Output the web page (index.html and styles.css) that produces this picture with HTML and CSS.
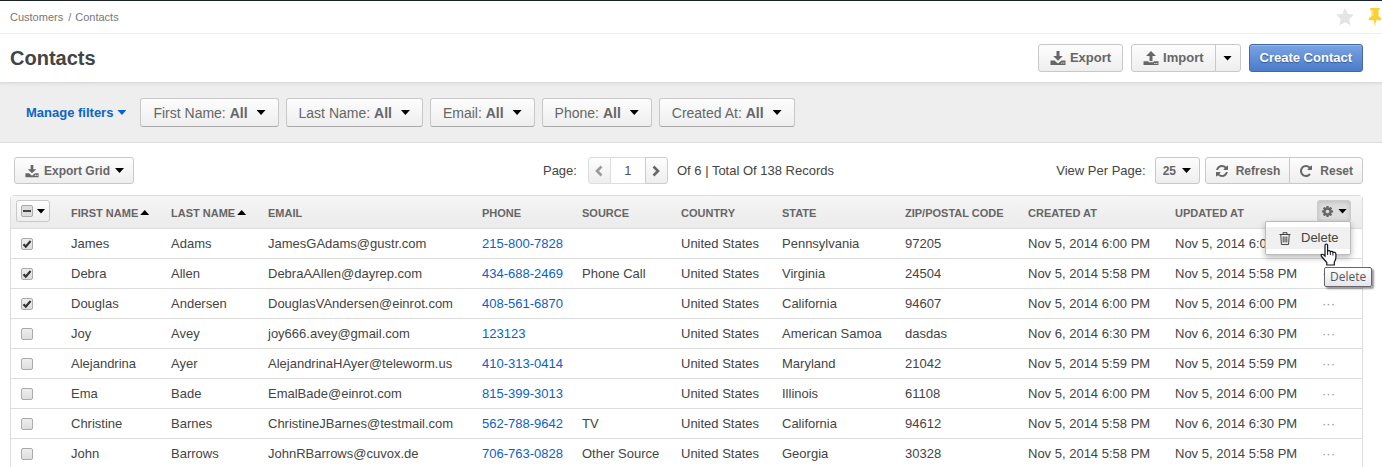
FILE: index.html
```html
<!DOCTYPE html>
<html lang="en">
<head>
<meta charset="utf-8">
<title>Contacts</title>
<link rel="stylesheet" href="styles.css">
</head>
<body>
<svg class="sprite" aria-hidden="true">
  <symbol id="download" viewBox="0 0 16 16"><path d="M6.500 1h3v5h3.300L8 10.700 3.200 6h3.300zM.5 10.500h4L8 13.500l3.500-3h4V15H.5zM11.200 12.400v1.200h1.200v-1.200zm2 0v1.200h1.200v-1.200z" fill-rule="evenodd"/></symbol>
  <symbol id="upload" viewBox="0 0 16 16"><path d="M6.500 11V6H3L8 1l5 5H9.500v5zM.5 11.300h5v1h5v-1h5v3.700H.5zM11.200 13v1h1.200v-1zm2 0v1h1.200v-1z" fill-rule="evenodd"/></symbol>
  <symbol id="refresh" viewBox="0 0 1792 1792"><path d="M1639 1056q0 5-1 7-64 268-268 434.500t-478 166.500q-146 0-282.500-55t-243.500-157l-129 129q-19 19-45 19t-45-19-19-45v-448q0-26 19-45t45-19h448q26 0 45 19t19 45-19 45l-137 137q71 66 161 102t187 36q134 0 250-65t186-179q11-17 53-117 8-23 30-23h192q13 0 22.500 9.500t9.500 22.500zm25-800v448q0 26-19 45t-45 19h-448q-26 0-45-19t-19-45 19-45l138-138q-148-137-349-137-134 0-250 65t-186 179q-11 17-53 117-8 23-30 23h-199q-13 0-22.500-9.500t-9.500-22.500v-7q65-268 270-434.500t480-166.500q146 0 284 55.500t245 156.500l130-129q19-19 45-19t45 19 19 45z"/></symbol>
  <symbol id="repeat" viewBox="0 0 1792 1792"><path d="M1664 256v448q0 26-19 45t-45 19h-448q-42 0-59-40-17-39 14-69l138-138q-148-137-349-137-104 0-198.500 40.500t-163.500 109.500-109.500 163.500-40.500 198.500 40.500 198.500 109.500 163.500 163.500 109.500 198.500 40.500q119 0 225-52t179-147q7-10 23-12 15 0 25 9l137 138q9 8 9.500 20.500t-7.500 22.500q-109 132-264 204.500t-327 72.500q-156 0-298-61t-245-164-164-245-61-298 61-298 164-245 245-164 298-61q147 0 284.500 55.500t244.500 156.500l130-129q29-31 70-14 39 17 39 59z"/></symbol>
  <symbol id="cog" viewBox="0 0 1792 1792"><path d="M1152 896q0-106-75-181t-181-75-181 75-75 181 75 181 181 75 181-75 75-181zm512-109v222q0 12-8 23t-20 13l-185 28q-19 54-39 91 35 50 107 138 10 12 10 25t-9 23q-27 37-99 108t-94 71q-12 0-26-9l-138-108q-44 23-91 38-16 136-29 186-7 28-36 28h-222q-14 0-24.500-8.500t-11.500-21.500l-28-184q-49-16-90-37l-141 107q-10 9-25 9-14 0-25-11-126-114-165-168-7-10-7-23 0-12 8-23 15-21 51-66.500t54-70.500q-27-50-41-99l-183-27q-13-2-21-12.500t-8-23.500v-222q0-12 8-23t19-13l186-28q14-46 39-92-40-57-107-138-10-12-10-24 0-10 9-23 26-36 98.500-107.500t94.500-71.500q13 0 26 10l138 107q44-23 91-38 16-136 29-186 7-28 36-28h222q14 0 24.500 8.500t11.500 21.500l28 184q49 16 90 37l142-107q9-9 24-9 13 0 25 10 129 119 165 170 7 8 7 22 0 12-8 23-15 21-51 66.500t-54 70.500q26 50 41 98l183 28q13 2 21 12.500t8 23.500z"/></symbol>
  <symbol id="left" viewBox="0 0 10 12"><path d="M7.500 1.500L3 6l4.500 4.500" fill="none" stroke="currentColor" stroke-width="2.600"/></symbol>
  <symbol id="right" viewBox="0 0 10 12"><path d="M2.500 1.500L7 6l-4.500 4.500" fill="none" stroke="currentColor" stroke-width="2.600"/></symbol>
</svg>

<nav class="crumbs" aria-label="Breadcrumb">
  <span>Customers</span><span class="slash">/</span><span>Contacts</span>
  <div class="marks">
    <svg class="star" viewBox="0 0 18 18"><path d="M9 0l2.700 5.900 6.300.700-4.700 4.300 1.300 6.600L9 14.200l-5.600 3.300 1.300-6.600L0 6.600l6.300-.700z"/></svg>
    <svg class="pin" viewBox="0 0 13 18"><path d="M2 0h9v2H9.800v6q2.700.700 2.700 3.500H7.500L6.500 18l-1-6.500H.5Q.5 8.700 3.200 8V2H2z"/><path d="M4.500 2.500v5" stroke="#fff" stroke-opacity=".5"/></svg>
  </div>
</nav>

<header class="title">
  <h1>Contacts</h1>
  <div class="actions">
    <button class="btn big"><svg class="ic16"><use href="#download"/></svg>Export</button>
    <div class="group">
      <button class="btn big"><svg class="ic16"><use href="#upload"/></svg>Import</button>
      <button class="btn big drop" aria-label="Import options"><i class="caret"></i></button>
    </div>
    <button class="btn big primary">Create Contact</button>
  </div>
</header>

<section class="filters">
  <button class="manage">Manage filters<i class="caret"></i></button>
  <button class="btn filter">First Name: <b>All</b><i class="caret"></i></button>
  <button class="btn filter">Last Name: <b>All</b><i class="caret"></i></button>
  <button class="btn filter">Email: <b>All</b><i class="caret"></i></button>
  <button class="btn filter">Phone: <b>All</b><i class="caret"></i></button>
  <button class="btn filter">Created At: <b>All</b><i class="caret"></i></button>
</section>

<main>
  <div class="toolbar">
    <div><button class="btn exportgrid"><svg class="ic14"><use href="#download"/></svg>Export Grid<i class="caret"></i></button></div>
    <div class="pager">
      <label for="page">Page:</label>
      <div class="group">
        <button class="btn step prev" aria-label="Previous page" disabled><svg><use href="#left"/></svg></button>
        <input id="page" type="text" value="1">
        <button class="btn step" aria-label="Next page"><svg><use href="#right"/></svg></button>
      </div>
      <span>Of 6 | Total Of 138 Records</span>
    </div>
    <div class="view">
      <label for="per">View Per Page:</label>
      <select id="per" class="btn"><option>25</option></select>
      <div class="group">
        <button class="btn act"><svg class="ic14"><use href="#refresh"/></svg>Refresh</button>
        <button class="btn act"><svg class="ic14"><use href="#repeat"/></svg>Reset</button>
      </div>
    </div>
  </div>

  <table class="grid">
    <colgroup><col class="c-sel"><col class="c-first"><col class="c-last"><col class="c-email"><col class="c-phone"><col class="c-source"><col class="c-country"><col class="c-state"><col class="c-zip"><col class="c-created"><col class="c-updated"><col class="c-act"></colgroup>
    <thead>
      <tr>
        <th class="tool"><div class="btn mini pick"><input type="checkbox" class="some" aria-label="Select all"><button class="bare" aria-label="Selection options"><i class="caret"></i></button></div></th>
        <th>FIRST NAME<i class="caret up"></i></th><th>LAST NAME<i class="caret up"></i></th><th>EMAIL</th><th>PHONE</th><th>SOURCE</th><th>COUNTRY</th><th>STATE</th><th>ZIP/POSTAL CODE</th><th>CREATED AT</th><th>UPDATED AT</th>
        <th class="tool">
          <div class="massact">
            <button class="btn mini open" aria-label="Mass actions"><svg class="ic14"><use href="#cog"/></svg><i class="caret"></i></button>
            <div class="menu"><button class="item"><svg viewBox="0 0 12 13"><path d="M.5 2.500h11M4 2V.7h4V2M1.800 3l.6 9.500h7.200L10.200 3M4.200 4.500v6M6 4.500v6M7.800 4.500v6" fill="none" stroke="currentColor"/></svg>Delete</button></div>
            <svg class="pointer" viewBox="0 0 18 23"><path d="M5 2.500Q5 1 6.300 1T7.600 2.500V8q2-1 2.700.6 2-.8 2.600.7 3-.7 3 2v3.200q0 2-1.600 4.500V22H6.800v-2.500L2 14Q.5 12 1.700 11.400T5 13z" fill="#fff" stroke="#112" stroke-width="1.200"/><path d="M7.600 8v4M10.300 8.600V12M12.900 9.500V12.500" stroke="#112" fill="none"/></svg>
            <div class="tip" role="tooltip">Delete</div>
          </div>
        </th>
      </tr>
    </thead>
    <tbody>
      <tr><td><input type="checkbox" aria-label="James Adams" checked></td><td>James</td><td>Adams</td><td>JamesGAdams@gustr.com</td><td><a href="#">215-800-7828</a></td><td></td><td>United States</td><td>Pennsylvania</td><td>97205</td><td>Nov 5, 2014 6:00 PM</td><td>Nov 5, 2014 6:00 PM</td><td class="more"></td></tr>
      <tr><td><input type="checkbox" aria-label="Debra Allen" checked></td><td>Debra</td><td>Allen</td><td>DebraAAllen@dayrep.com</td><td><a href="#">434-688-2469</a></td><td>Phone Call</td><td>United States</td><td>Virginia</td><td>24504</td><td>Nov 5, 2014 5:58 PM</td><td>Nov 5, 2014 5:58 PM</td><td class="more">···</td></tr>
      <tr><td><input type="checkbox" aria-label="Douglas Andersen" checked></td><td>Douglas</td><td>Andersen</td><td>DouglasVAndersen@einrot.com</td><td><a href="#">408-561-6870</a></td><td></td><td>United States</td><td>California</td><td>94607</td><td>Nov 5, 2014 6:00 PM</td><td>Nov 5, 2014 6:00 PM</td><td class="more">···</td></tr>
      <tr><td><input type="checkbox" aria-label="Joy Avey"></td><td>Joy</td><td>Avey</td><td>joy666.avey@gmail.com</td><td><a href="#">123123</a></td><td></td><td>United States</td><td>American Samoa</td><td>dasdas</td><td>Nov 6, 2014 6:30 PM</td><td>Nov 6, 2014 6:30 PM</td><td class="more">···</td></tr>
      <tr><td><input type="checkbox" aria-label="Alejandrina Ayer"></td><td>Alejandrina</td><td>Ayer</td><td>AlejandrinaHAyer@teleworm.us</td><td><a href="#">410-313-0414</a></td><td></td><td>United States</td><td>Maryland</td><td>21042</td><td>Nov 5, 2014 5:59 PM</td><td>Nov 5, 2014 5:59 PM</td><td class="more">···</td></tr>
      <tr><td><input type="checkbox" aria-label="Ema Bade"></td><td>Ema</td><td>Bade</td><td>EmalBade@einrot.com</td><td><a href="#">815-399-3013</a></td><td></td><td>United States</td><td>Illinois</td><td>61108</td><td>Nov 5, 2014 6:00 PM</td><td>Nov 5, 2014 6:00 PM</td><td class="more">···</td></tr>
      <tr><td><input type="checkbox" aria-label="Christine Barnes"></td><td>Christine</td><td>Barnes</td><td>ChristineJBarnes@testmail.com</td><td><a href="#">562-788-9642</a></td><td>TV</td><td>United States</td><td>California</td><td>94612</td><td>Nov 5, 2014 5:58 PM</td><td>Nov 6, 2014 6:30 PM</td><td class="more">···</td></tr>
      <tr><td><input type="checkbox" aria-label="John Barrows"></td><td>John</td><td>Barrows</td><td>JohnRBarrows@cuvox.de</td><td><a href="#">706-763-0828</a></td><td>Other Source</td><td>United States</td><td>Georgia</td><td>30328</td><td>Nov 5, 2014 5:58 PM</td><td>Nov 5, 2014 5:58 PM</td><td class="more">···</td></tr>
    </tbody>
  </table>
</main>
</body>
</html>
```
FILE: styles.css
```css
* { box-sizing: border-box; }
html { scrollbar-width: none; }
body {
  margin: 0;
  border-top: 1px solid #1b222b;
  background: #fff;
  color: #444;
  font: 13px/20px "Liberation Sans", Arial, sans-serif;
}
button, input, select { font: inherit; color: inherit; margin: 0; }
svg { fill: currentColor; flex: none; }
.sprite { position: absolute; width: 0; height: 0; }
.ic16 { width: 16px; height: 16px; }
.ic14 { width: 14px; height: 14px; }

.caret {
  display: inline-block;
  flex: none;
  width: 9px;
  height: 5px;
  background: #000;
  clip-path: polygon(0 0, 100% 0, 50% 100%);
}
.caret.up { clip-path: polygon(50% 0, 100% 100%, 0 100%); margin-left: 2px; vertical-align: 2px; }

.crumbs {
  display: flex;
  align-items: center;
  height: 33px;
  padding-left: 10px;
  border-bottom: 1px solid #efefef;
  color: #777;
  font-size: 11px;
}
.slash { margin: 0 4px 0 5px; }
.marks { display: flex; gap: 14px; margin-left: auto; }
.star { width: 18px; height: 18px; color: #e4e4e4; }
.pin { width: 14px; height: 19px; color: #fdd02f; }

.title {
  display: flex;
  align-items: center;
  justify-content: space-between;
  padding: 10px 19px 10px 10px;
  border-bottom: 1px solid #ddd;
}
h1 { margin: 0; font-size: 20px; line-height: 28px; }
.actions { display: flex; gap: 8px; }
.group { display: flex; }

.btn {
  display: inline-flex;
  align-items: center;
  justify-content: center;
  height: 27px;
  padding: 0 11px;
  border: 1px solid #c8c8c8;
  border-radius: 3px;
  background: linear-gradient(#fdfdfd, #eee);
  color: #666;
  font-size: 12px;
  font-weight: bold;
  line-height: 20px;
  white-space: nowrap;
}
.group > :not(:last-child) { border-top-right-radius: 0; border-bottom-right-radius: 0; }
.group > :not(:first-child) { border-top-left-radius: 0; border-bottom-left-radius: 0; margin-left: -1px; }
.big { height: 28px; gap: 4px; font-size: 13px; }
.drop { width: 26px; padding: 0; }
.primary {
  padding: 0 10px;
  border-color: #44699f;
  background: linear-gradient(#7aa3e3, #4c7bc9);
  color: #fff;
  text-shadow: 0 1px 1px #35598f;
  box-shadow: inset 0 1px #94b6ea;
}

.filters {
  display: flex;
  align-items: center;
  gap: 7px;
  padding: 15px 26px;
  border-bottom: 1px solid #ddd;
  background: #eee;
  box-shadow: inset 0 3px 3px -2px #ddd;
}
.manage {
  display: flex;
  align-items: center;
  gap: 4px;
  margin-right: 7px;
  padding: 0;
  border: 0;
  background: none;
  color: #0a64c9;
  font-weight: bold;
}
.manage .caret { background: #0a64c9; }
.filter { height: 29px; padding: 0 12px; border-bottom-color: #aaa; font-size: 14px; font-weight: normal; white-space: pre; }
.filter .caret { margin-left: 9px; }

main { padding: 14px 19px 0 10px; }
.toolbar {
  display: grid;
  grid-template-columns: 1fr auto 1fr;
  align-items: center;
  padding: 0 0 11px 4px;
}
.toolbar > div { display: flex; align-items: center; }
.exportgrid { gap: 5px; padding: 0 9px 0 10px; }
.pager > .group { margin: 0 9px 0 11px; }
.step { width: 23px; padding: 0; border-color: #ccc; }
.step svg { width: 10px; height: 12px; }
.prev { border-color: #ddd; color: #999; }
#page {
  width: 36px;
  height: 27px;
  border: 1px solid #ddd;
  border-radius: 0;
  background: #fff;
  color: #555;
  text-align: center;
}
.view { justify-content: flex-end; }
#per {
  appearance: none;
  width: 45px;
  margin: 0 5px 0 9px;
  padding: 0 0 0 7px;
  background: url("data:image/svg+xml,%3Csvg xmlns='http://www.w3.org/2000/svg' width='9' height='5'%3E%3Cpath d='M0 0h9L4.500 5z'/%3E%3C/svg%3E") 26px center no-repeat, linear-gradient(#fdfdfd, #eee);
}
.act { gap: 7px; padding: 0 9px; }

.grid {
  width: 100%;
  table-layout: fixed;
  border: 1px solid #ddd;
  border-radius: 4px 4px 0 0;
  border-spacing: 0;
}
.c-sel { width: 50px; }
.c-first { width: 100px; }
.c-last { width: 97px; }
.c-email { width: 214px; }
.c-phone { width: 100px; }
.c-source { width: 99px; }
.c-country { width: 101px; }
.c-state { width: 123px; }
.c-zip { width: 123px; }
.c-created { width: 147px; }
.c-updated { width: 142px; }
.c-act { width: 55px; }
th, td {
  height: 30px;
  padding: 0 10px;
  border-bottom: 1px solid #ddd;
  text-align: left;
  white-space: nowrap;
}
th { height: 33px; background: linear-gradient(#f5f5f5, #ebebeb); color: #666; font-size: 11px; padding-top: 2px; }
th.tool { padding: 0 0 2px 5px; }
th.tool:last-child { padding-left: 10px; }
a { color: #0a5fcb; text-decoration: none; }
td.more { padding-left: 15px; color: #999; }

input[type="checkbox"] {
  display: block;
  appearance: none;
  width: 12px;
  height: 12px;
  border: 1px solid #aaa;
  border-radius: 2px;
  background: center no-repeat, linear-gradient(#eee, #ddd);
}
input[type="checkbox"]:checked { background-image: url("data:image/svg+xml,%3Csvg xmlns='http://www.w3.org/2000/svg' width='10' height='10'%3E%3Cpath d='M1.500 5.200l2.300 2.500L8.600 2' fill='none' stroke='%23333' stroke-width='2.200'/%3E%3C/svg%3E"), linear-gradient(#eee, #ddd); }
input[type="checkbox"].some { background: linear-gradient(#444, #444) center / 8px 2px no-repeat, #ddd; }
.mini { display: flex; height: 22px; width: 34px; padding: 0; gap: 4px; }
.bare { display: flex; padding: 4px 0; border: 0; background: none; }
.massact { position: relative; width: 34px; }
.open { border-color: #ccc; background: #ddd; box-shadow: inset 0 1px 4px #bbb; }
.open .ic14 { width: 13px; height: 13px; }
.menu {
  position: absolute;
  z-index: 1;
  top: 21px;
  right: 0;
  width: 86px;
  padding: 5px 0;
  border: 1px solid #bbb;
  border-radius: 2px;
  background: #fff;
  box-shadow: 0 3px 6px #0004;
}
.item {
  display: flex;
  align-items: center;
  gap: 10px;
  width: 100%;
  height: 22px;
  padding: 0 13px;
  border: 0;
  background: #f0f0f0;
  font-size: 13px;
  font-weight: normal;
  color: #444;
}
.item svg { width: 12px; height: 13px; }
.pointer { position: absolute; z-index: 2; top: 43px; left: 3px; width: 18px; height: 23px; }
.tip {
  position: absolute;
  z-index: 1;
  top: 67px;
  left: 7px;
  padding: 0 5px;
  border: 1px solid #666;
  border-radius: 2px;
  background: linear-gradient(#fff, #e4e5f0);
  box-shadow: 2px 2px 2px #0006;
  color: #575757;
  font: 12px/18px "Open Sans", sans-serif;
}
```
